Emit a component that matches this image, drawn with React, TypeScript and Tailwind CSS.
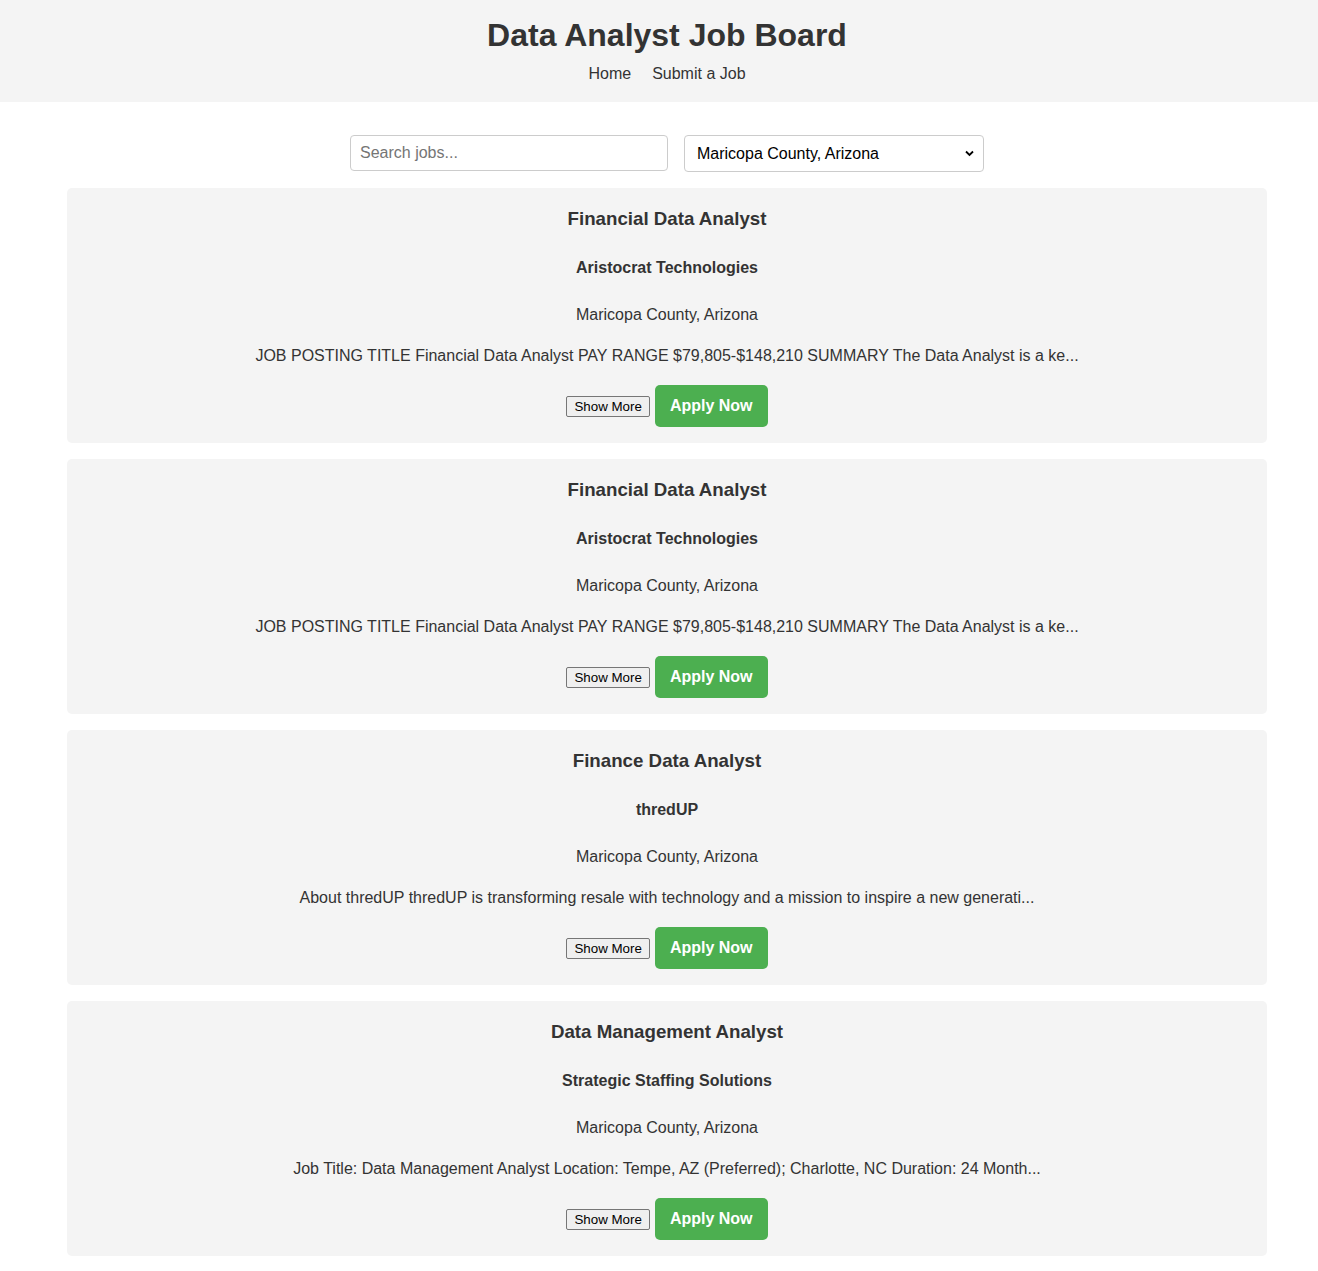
const jobs = [
  {
    title: "Financial Data Analyst",
    company: "Aristocrat Technologies",
    location: "Maricopa County, Arizona",
    summary:
      "JOB POSTING TITLE Financial Data Analyst PAY RANGE $79,805-$148,210 SUMMARY The Data Analyst is a ke...",
  },
  {
    title: "Financial Data Analyst",
    company: "Aristocrat Technologies",
    location: "Maricopa County, Arizona",
    summary:
      "JOB POSTING TITLE Financial Data Analyst PAY RANGE $79,805-$148,210 SUMMARY The Data Analyst is a ke...",
  },
  {
    title: "Finance Data Analyst",
    company: "thredUP",
    location: "Maricopa County, Arizona",
    summary:
      "About thredUP thredUP is transforming resale with technology and a mission to inspire a new generati...",
  },
  {
    title: "Data Management Analyst",
    company: "Strategic Staffing Solutions",
    location: "Maricopa County, Arizona",
    summary:
      "Job Title: Data Management Analyst Location: Tempe, AZ (Preferred); Charlotte, NC Duration: 24 Month...",
  },
];

interface Job {
  title: string;
  company: string;
  location: string;
  summary: string;
}

const JobCard = ({ job }: { job: Job }) => {
  return (
    <div className="flex flex-col items-center bg-[#f4f4f4] rounded-[5px] pt-[20px] pb-[16px] text-[#333] text-center">
      <h3 className="text-[18.72px] leading-[22px] font-bold">{job.title}</h3>
      <h4 className="mt-[29px] text-[16px] leading-[18px] font-bold">{job.company}</h4>
      <p className="mt-[29px] text-[16px] leading-[18px]">{job.location}</p>
      <p className="mt-[23px] text-[16px] leading-[18px]">{job.summary}</p>
      <div className="mt-[20px] flex items-center gap-[5px]">
        <button className="h-[21px] px-[7px] text-[13.33px] leading-[15px] text-black bg-[#efefef] border border-[#767676] rounded-[2px]">
          Show More
        </button>
        <a
          href="#"
          className="block h-[42px] px-[15px] py-3 text-[16px] leading-[18px] font-bold text-white bg-[#4caf50] rounded-[5px]"
        >
          Apply Now
        </a>
      </div>
    </div>
  );
};

export default function App() {
  return (
    <div className="min-h-screen bg-white font-['Liberation_Sans',Arial,sans-serif] text-[#333]">
      <header className="bg-[#f4f4f4] pl-4 pt-[16px] pb-[19px] text-center">
        <h1 className="text-[32px] leading-[38px] font-bold">Data Analyst Job Board</h1>
        <nav className="mt-[11px] flex justify-center gap-[21px] text-[16px] leading-[18px]">
          <a href="#">Home</a>
          <a href="#">Submit a Job</a>
        </nav>
      </header>

      <main className="pl-4 pb-4">
        <div className="mt-[33px] flex justify-center items-start gap-4">
          <input
            type="text"
            placeholder="Search jobs..."
            className="w-[318px] h-[36px] px-[9px] text-[16px] border border-[#ccc] rounded-[4px] bg-white placeholder:text-[#757575] outline-none"
          />
          <div className="relative w-[300px] h-[37px]">
            <select className="w-full h-full appearance-none pl-[12px] pr-8 text-[16px] text-black bg-white border border-[#ccc] rounded-[4px] outline-none">
              <option>Maricopa County, Arizona</option>
            </select>
            <svg
              className="absolute right-[10px] top-[15px] pointer-events-none"
              width="9"
              height="7"
              viewBox="0 0 9 7"
            >
              <path d="M1 1.5 L4.5 5 L8 1.5" fill="none" stroke="#000" strokeWidth="1.8" />
            </svg>
          </div>
        </div>

        <div className="mx-auto mt-4 w-[1200px] flex flex-col gap-4">
          {jobs.map((job, i) => (
            <JobCard key={i} job={job} />
          ))}
        </div>
      </main>
    </div>
  );
}
